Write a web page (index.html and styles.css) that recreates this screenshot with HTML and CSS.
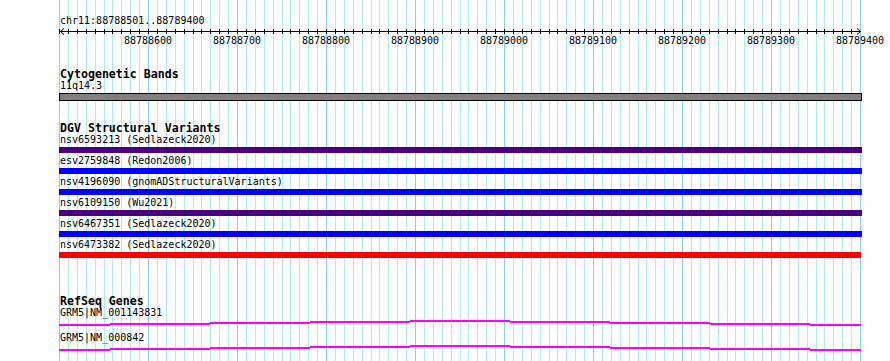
FILE: index.html
```html
<!DOCTYPE html>
<html>
<head>
<meta charset="utf-8">
<link rel="stylesheet" href="styles.css">
</head>
<body>
<div class="page">
  <svg class="grid" width="890" height="361" viewBox="0 0 890 361" shape-rendering="crispEdges">
    <path class="minor" d="M68.5 0V361M77.5 0V361M86.5 0V361M95.5 0V361M104.5 0V361M112.5 0V361M121.5 0V361M130.5 0V361M139.5 0V361M157.5 0V361M166.5 0V361M175.5 0V361M184.5 0V361M193.5 0V361M201.5 0V361M210.5 0V361M219.5 0V361M228.5 0V361M246.5 0V361M255.5 0V361M264.5 0V361M273.5 0V361M282.5 0V361M290.5 0V361M299.5 0V361M308.5 0V361M317.5 0V361M335.5 0V361M344.5 0V361M353.5 0V361M362.5 0V361M371.5 0V361M379.5 0V361M388.5 0V361M397.5 0V361M406.5 0V361M424.5 0V361M433.5 0V361M442.5 0V361M451.5 0V361M460.5 0V361M468.5 0V361M477.5 0V361M486.5 0V361M495.5 0V361M513.5 0V361M522.5 0V361M531.5 0V361M540.5 0V361M549.5 0V361M557.5 0V361M566.5 0V361M575.5 0V361M584.5 0V361M602.5 0V361M611.5 0V361M620.5 0V361M629.5 0V361M638.5 0V361M646.5 0V361M655.5 0V361M664.5 0V361M673.5 0V361M691.5 0V361M700.5 0V361M709.5 0V361M718.5 0V361M727.5 0V361M735.5 0V361M744.5 0V361M753.5 0V361M762.5 0V361M780.5 0V361M789.5 0V361M798.5 0V361M807.5 0V361M816.5 0V361M824.5 0V361M833.5 0V361M842.5 0V361M851.5 0V361"/>
    <path class="major" d="M59.5 0V361M148.5 0V361M237.5 0V361M326.5 0V361M415.5 0V361M504.5 0V361M593.5 0V361M682.5 0V361M771.5 0V361M860.5 0V361"/>
  </svg>

  <div class="tracks">
    <div class="loc">chr11:88788501..88789400</div>
    <svg class="ruler" width="890" height="7" viewBox="0 28 890 7">
      <path class="ticks" shape-rendering="crispEdges" d="M60 31.5H861M59.5 29V34M68.5 29V34M77.5 29V34M86.5 29V34M95.5 29V34M104.5 29V34M112.5 29V34M121.5 29V34M130.5 29V34M139.5 29V34M148.5 29V34M157.5 29V34M166.5 29V34M175.5 29V34M184.5 29V34M193.5 29V34M201.5 29V34M210.5 29V34M219.5 29V34M228.5 29V34M237.5 29V34M246.5 29V34M255.5 29V34M264.5 29V34M273.5 29V34M282.5 29V34M290.5 29V34M299.5 29V34M308.5 29V34M317.5 29V34M326.5 29V34M335.5 29V34M344.5 29V34M353.5 29V34M362.5 29V34M371.5 29V34M379.5 29V34M388.5 29V34M397.5 29V34M406.5 29V34M415.5 29V34M424.5 29V34M433.5 29V34M442.5 29V34M451.5 29V34M460.5 29V34M468.5 29V34M477.5 29V34M486.5 29V34M495.5 29V34M504.5 29V34M513.5 29V34M522.5 29V34M531.5 29V34M540.5 29V34M549.5 29V34M557.5 29V34M566.5 29V34M575.5 29V34M584.5 29V34M593.5 29V34M602.5 29V34M611.5 29V34M620.5 29V34M629.5 29V34M638.5 29V34M646.5 29V34M655.5 29V34M664.5 29V34M673.5 29V34M682.5 29V34M691.5 29V34M700.5 29V34M709.5 29V34M718.5 29V34M727.5 29V34M735.5 29V34M744.5 29V34M753.5 29V34M762.5 29V34M771.5 29V34M780.5 29V34M789.5 29V34M798.5 29V34M807.5 29V34M816.5 29V34M824.5 29V34M833.5 29V34M842.5 29V34M851.5 29V34"/>
      <path class="arrow" d="M64 28.5L60.5 31.5L64 34.5M857 28.5L860.5 31.5L857 34.5"/>
    </svg>
    <div class="ruler-labels">
      <span>88788600</span><span>88788700</span><span>88788800</span><span>88788900</span><span>88789000</span><span>88789100</span><span>88789200</span><span>88789300</span><span>88789400</span>
    </div>

    <div class="track-title first">Cytogenetic Bands</div>
    <div class="label">11q14.3</div>
    <div class="band"></div>

    <div class="track-title">DGV Structural Variants</div>
    <div class="row"><div class="label">nsv6593213 (Sedlazeck2020)</div><div class="bar indigo"></div></div>
    <div class="row"><div class="label">esv2759848 (Redon2006)</div><div class="bar blue"></div></div>
    <div class="row"><div class="label">nsv4196090 (gnomADStructuralVariants)</div><div class="bar blue"></div></div>
    <div class="row"><div class="label">nsv6109150 (Wu2021)</div><div class="bar indigo"></div></div>
    <div class="row"><div class="label">nsv6467351 (Sedlazeck2020)</div><div class="bar blue"></div></div>
    <div class="row"><div class="label">nsv6473382 (Sedlazeck2020)</div><div class="bar red short"></div></div>

    <div class="track-title genes">RefSeq Genes</div>
    <div class="gene">
      <div class="label">GRM5|NM_001143831</div>
      <svg class="gene-line" width="890" height="13" viewBox="0 0 890 13" shape-rendering="crispEdges">
        <rect x="59" y="5" width="51" height="2"/><rect x="110" y="4" width="100" height="2"/><rect x="210" y="3" width="100" height="2"/><rect x="310" y="2" width="100" height="2"/><rect x="410" y="1" width="100" height="2"/><rect x="510" y="2" width="100" height="2"/><rect x="610" y="3" width="100" height="2"/><rect x="710" y="4" width="100" height="2"/><rect x="810" y="5" width="51" height="2"/>
      </svg>
    </div>
    <div class="gene">
      <div class="label">GRM5|NM_000842</div>
      <svg class="gene-line" width="890" height="13" viewBox="0 0 890 13" shape-rendering="crispEdges">
        <rect x="59" y="5" width="51" height="2"/><rect x="110" y="4" width="100" height="2"/><rect x="210" y="3" width="100" height="2"/><rect x="310" y="2" width="100" height="2"/><rect x="410" y="1" width="100" height="2"/><rect x="510" y="2" width="100" height="2"/><rect x="610" y="3" width="100" height="2"/><rect x="710" y="4" width="100" height="2"/><rect x="810" y="5" width="51" height="2"/>
      </svg>
    </div>
  </div>
</div>
</body>
</html>
```

FILE: styles.css
```css
html, body {
  margin: 0;
  padding: 0;
  background: #ffffff;
}

.page {
  position: relative;
  width: 890px;
  height: 361px;
  overflow: hidden;
  background: #ffffff;
  font-family: "DejaVu Sans Mono", "Liberation Mono", monospace;
  font-size: 10px;
  line-height: 12px;
  color: #000000;
}

.grid {
  position: absolute;
  left: 0;
  top: 0;
  display: block;
}

.grid .minor {
  stroke: #afeeee;
  stroke-width: 1;
  fill: none;
}

.grid .major {
  stroke: #87cefa;
  stroke-width: 1;
  fill: none;
}

.tracks {
  position: relative;
  display: flex;
  flex-direction: column;
  width: 890px;
}

.loc {
  margin-top: 15px;
  padding-left: 60px;
  height: 12px;
  white-space: nowrap;
}

.ruler {
  display: block;
  margin-top: 1px;
}

.ruler .ticks,
.ruler .arrow {
  stroke: #000000;
  stroke-width: 1;
  fill: none;
}

.ruler-labels {
  display: flex;
  margin-left: 103.5px;
  height: 12px;
}

.ruler-labels span {
  flex: 0 0 89px;
  text-align: center;
  white-space: nowrap;
}

.track-title {
  margin-top: 21px;
  padding-left: 60px;
  height: 12px;
  font-weight: bold;
  font-size: 11.6px;
  line-height: 12px;
  white-space: nowrap;
}

.track-title.genes {
  margin-top: 35px;
}

.label {
  padding-left: 60px;
  height: 12px;
  white-space: nowrap;
}

.band {
  margin-top: 1px;
  margin-left: 59px;
  width: 801px;
  height: 6px;
  background: #808080;
  border: 1px solid #000000;
}

.row {
  display: flex;
  flex-direction: column;
  height: 21px;
}

.bar {
  margin-top: 1px;
  margin-left: 59px;
  width: 803px;
  height: 6px;
}

.bar.short {
  width: 802px;
}

.indigo { background: #4b0082; }
.blue { background: #0000ff; }
.red { background: #ff0000; }

.gene {
  display: flex;
  flex-direction: column;
  height: 25px;
}

.gene-line {
  display: block;
  fill: #ff00ff;
}
```
